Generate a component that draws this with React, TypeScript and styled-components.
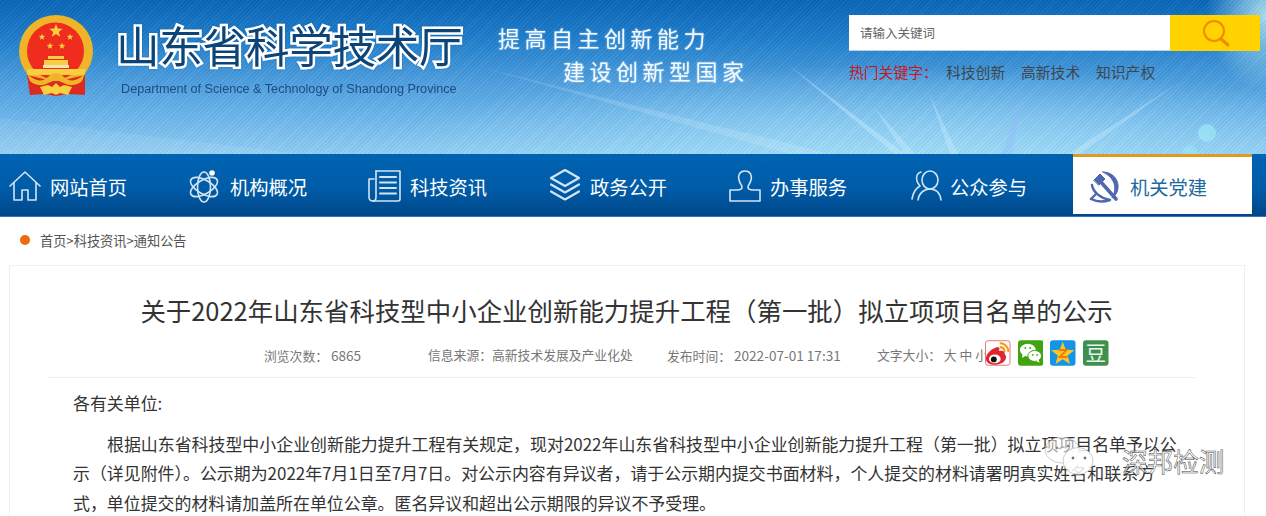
import React from "react";
import styled, { createGlobalStyle } from "styled-components";

const CJK = `"Noto Sans CJK SC", "Liberation Sans", sans-serif`;

const Global = createGlobalStyle`
  html, body { margin: 0; padding: 0; background: #fff; overflow: hidden; }
  body { font-family: ${CJK}; }
  * { box-sizing: border-box; }
`;

const Page = styled.div`
  position: relative;
  width: 1266px;
  height: 516px;
  overflow: hidden;
`;

const Banner = styled.header`
  position: relative;
  height: 154px;
  display: flex;
  overflow: hidden;
  background:
    radial-gradient(ellipse 60px 75px at 1266px 15px, rgba(200, 245, 250, 0.85), transparent 100%),
    radial-gradient(ellipse 700px 130px at 900px 170px, rgba(170, 230, 252, 0.8), transparent 80%),
    linear-gradient(180deg, #0a66b8 0%, #1f7fcc 25%, #4d9fdf 52%, #6db7ec 75%, #92d0f5 100%);
  &::before {
    content: "";
    position: absolute;
    inset: 0;
    background: repeating-linear-gradient(
      -45deg,
      rgba(255, 255, 255, 0.05) 0 1px,
      rgba(0, 40, 100, 0.05) 1px 3px
    );
  }
`;

const Rays = styled.svg`
  position: absolute;
  left: 0;
  top: 0;
  pointer-events: none;
`;

const Brand = styled.div`
  position: relative;
  display: flex;
  width: 488px;
  padding: 15px 0 0 18px;
`;

const Emblem = styled.svg`
  flex: none;
  width: 76px;
  height: 81px;
`;

const BrandText = styled.div`
  margin-left: 22px;
  display: flex;
  flex-direction: column;
  padding-top: 2px;
`;

const Ministry = styled.div`
  font-size: 43.6px;
  line-height: 54px;
  font-weight: 400;
  color: #0d4478;
  letter-spacing: -0.3px;
  white-space: nowrap;
  -webkit-text-stroke: 5px #fff;
  paint-order: stroke fill;
  filter: drop-shadow(0 0 1px rgba(10, 70, 130, 0.35));
`;

const English = styled.div`
  margin: 10px 0 0 5px;
  font-family: "Liberation Sans", sans-serif;
  font-size: 12.65px;
  line-height: 16px;
  color: #1c4c80;
  white-space: nowrap;
  filter: blur(0.25px);
`;

const Slogan = styled.div`
  position: relative;
  width: 361px;
  display: flex;
  flex-direction: column;
  padding: 21px 0 0 10px;
`;

const SloganLine = styled.div<{ $indent: number }>`
  margin-left: ${(p) => p.$indent}px;
  font-family: "Noto Sans CJK SC", sans-serif;
  font-size: 22px;
  line-height: 33px;
  font-weight: 400;
  letter-spacing: 4.5px;
  color: #f2f9ff;
  white-space: nowrap;
  text-shadow: 0 0 2px rgba(255, 255, 255, 0.6);
  filter: blur(0.3px);
`;

const SearchArea = styled.div`
  position: relative;
  padding-top: 15px;
  width: 411px;
`;

const SearchBar = styled.div`
  display: flex;
  height: 36px;
`;

const SearchInput = styled.div`
  width: 321px;
  padding-left: 11px;
  background: #fff;
  border-bottom: 1px solid #b9d3e8;
  font-size: 12.5px;
  line-height: 35px;
  color: #666;
`;

const SearchButton = styled.div`
  width: 90px;
  background: #ffd200;
  display: flex;
  align-items: center;
  justify-content: center;
  padding-left: 2px;
`;

const Hot = styled.div`
  display: flex;
  margin-top: 10px;
  font-size: 14.8px;
  line-height: 22px;
  color: #3c4650;
  white-space: nowrap;
`;

const HotLabel = styled.span`
  color: #c8161d;
  width: 97px;
`;

const HotLink = styled.span`
  margin-right: 15.8px;
`;

const Nav = styled.nav`
  position: relative;
  height: 63px;
  display: flex;
  padding-left: 8px;
  background: linear-gradient(180deg, #0063b2 0%, #005ca8 55%, #00478a 100%);
  border-bottom: 1px solid #2f77b5;
`;

const NavItem = styled.div<{ $active?: boolean }>`
  display: flex;
  align-items: center;
  gap: ${(p) => (p.$active ? "10px" : "8px")};
  width: 180px;
  padding-top: 2px;
  font-size: 19.3px;
  color: #fff;
  white-space: nowrap;
  ${(p) =>
    p.$active &&
    `
    width: 179px;
    margin: 0 0 2px -15px;
    padding: 0 0 0 15px;
    background: #fff;
    color: #1f6a9c;
    border-top: 3px solid #e09a20;
  `}
`;

const NavLabel = styled.span`
  padding-top: 2px;
`;

const NavIcon = styled.svg`
  flex: none;
  width: 34px;
  height: 34px;
  fill: none;
  stroke: #d5e4f2;
  stroke-width: 1.6;
  stroke-linejoin: round;
  stroke-linecap: round;
`;

const PartyIcon = styled.svg`
  flex: none;
  width: 32px;
  height: 34px;
  fill: none;
  stroke: #4f68b0;
  stroke-linecap: round;
  stroke-linejoin: round;
`;

const Crumbs = styled.div`
  display: flex;
  align-items: center;
  height: 46px;
  margin-bottom: 2px;
  padding-left: 20px;
  font-size: 13.2px;
  color: #555;
`;

const Dot = styled.span`
  width: 10px;
  height: 10px;
  margin-right: 10px;
  border-radius: 50%;
  background: #ee6a0a;
`;

const Article = styled.main`
  margin-left: 9px;
  width: 1236px;
  height: 300px;
  padding: 0 48px 0 37px;
  border: 1px solid #f0f0f0;
  border-bottom: none;
`;

const Title = styled.h1`
  margin: 27px 0 0 10px;
  font-size: 25.45px;
  line-height: 34px;
  font-weight: 400;
  text-align: center;
  color: #333;
  white-space: nowrap;
`;

const Meta = styled.div`
  display: flex;
  align-items: center;
  height: 51px;
  padding: 5px 0 0 217px;
  border-bottom: 1px solid #eee;
  font-size: 12.8px;
  color: #777;
  white-space: nowrap;
`;

const MetaItem = styled.span<{ $w: number }>`
  width: ${(p) => p.$w}px;
  flex: none;
`;

const MetaValue = styled.span`
  margin-left: 3px;
  font-size: 13.6px;
`;

const Share = styled.div`
  display: flex;
  gap: 7.2px;
  margin-top: -4px;
`;

const ShareIcon = styled.svg`
  display: block;
  width: 25.5px;
  height: 26px;
`;

const Body = styled.div`
  padding: 0 15px 0 26px;
  margin-right: -1px;
  font-size: 16.93px;
  line-height: 29.7px;
  color: #333;
`;

const Greeting = styled.p`
  margin: 10px 0 11px 0;
`;

const Para = styled.p`
  margin: 0;
  text-indent: 34px;
`;

const Watermark = styled.div`
  position: absolute;
  left: 1044px;
  top: 437px;
  display: flex;
  align-items: flex-start;
`;

const WmText = styled.span`
  margin: 6px 0 0 26px;
  font-size: 25.6px;
  line-height: 36px;
  font-weight: 400;
  white-space: nowrap;
  color: rgba(255, 255, 255, 0.6);
  -webkit-text-stroke: 0.5px #444;
`;

const Bubble = styled.svg`
  flex: none;
  width: 52px;
  height: 40px;
`;

const star = (cx: number, cy: number, r: number) => {
  const pts: string[] = [];
  for (let i = 0; i < 10; i++) {
    const rad = i % 2 ? r * 0.42 : r;
    const a = -Math.PI / 2 + (i * Math.PI) / 5;
    pts.push(`${(cx + rad * Math.cos(a)).toFixed(2)},${(cy + rad * Math.sin(a)).toFixed(2)}`);
  }
  return pts.join(" ");
};

const icons: Record<string, React.ReactNode> = {
  home: (
    <>
      <path d="M2 17 L17 3 L32 17" />
      <path d="M6 14 V31 H14 V21 H20 V31 H28 V14" />
    </>
  ),
  atom: (
    <>
      <ellipse cx="16" cy="18" rx="15" ry="7" transform="rotate(30 16 18)" />
      <ellipse cx="16" cy="18" rx="15" ry="7" transform="rotate(-30 16 18)" />
      <ellipse cx="16" cy="18" rx="6.5" ry="15" />
      <circle cx="24" cy="4" r="2.8" fill="#fff" stroke="none" />
    </>
  ),
  news: (
    <>
      <path d="M8 2 H32 V30 Q32 32 30 32 H5 Q1 32 1 28 V10 H6" />
      <path d="M8 2 V28 Q8 32 5 32" />
      <path d="M12 8 H28 M12 13.5 H28 M12 19 H28 M12 24.5 H28" strokeWidth="2" />
    </>
  ),
  layers: (
    <>
      <path d="M17 1 L31 9 L17 17 L3 9 Z" strokeWidth="2.2" />
      <path d="M3 15.5 L17 23.5 L31 15.5" strokeWidth="2.2" />
      <path d="M3 22.5 L17 30.5 L31 22.5" strokeWidth="2.2" />
    </>
  ),
  person: (
    <>
      <path d="M17 2 C11 2 10 7 11 11 C12 15 14 16 14 18 C14 21 11 21 9 21 H2 V32 H32 V21 H25 C23 21 20 21 20 18 C20 16 22 15 23 11 C24 7 23 2 17 2 Z" />
    </>
  ),
  users: (
    <>
      <ellipse cx="22" cy="11" rx="8" ry="9" />
      <path d="M10 31 C11 24 16 20 22 20 C28 20 32 24 33 31" />
      <path d="M13 3 C9 4 8 8 9 12 C10 15 11 16 12 17 C8 19 5 24 4 30" />
    </>
  ),
};

const navs = [
  ["home", "网站首页"],
  ["atom", "机构概况"],
  ["news", "科技资讯"],
  ["layers", "政务公开"],
  ["person", "办事服务"],
  ["users", "公众参与"],
];

export default function App() {
  return (
    <Page>
      <Global />
      <Banner>
        <Rays width="1266" height="154" viewBox="0 0 1266 154" fill="none">
          <path d="M786 63 L905 154 H895 Z" fill="#d8f3ff" opacity="0.35" />
          <path d="M929 93 L950 154 H958 Z" fill="#d8f3ff" opacity="0.3" />
          <path d="M874 107 L905 154 H915 Z" fill="#d8f3ff" opacity="0.3" />
          <path d="M480 67 L830 154 H790 Z" fill="#ffffff" opacity="0.14" />
          <path d="M1023 93 L1002 154 H1012 Z" fill="#8fb8ff" opacity="0.35" />
          <path d="M1178 83 L1068 154 H1080 Z" fill="#d8f3ff" opacity="0.3" />
          <path d="M0 118 L300 154 H0 Z" fill="#ffffff" opacity="0.08" />
          <circle cx="1207" cy="133" r="9" fill="#a8f4fb" opacity="0.5" />
          <circle cx="1190" cy="152" r="7" fill="#a8f4fb" opacity="0.3" />
        </Rays>
        <Brand>
          <Emblem viewBox="0 0 76 81">
            <ellipse cx="38" cy="36" rx="37" ry="36" fill="#f0b429" />
            <circle cx="37.5" cy="36" r="28.5" fill="#ee2d1f" />
            <polygon points={star(38, 16, 7)} fill="#f8cf3f" />
            <polygon points={star(24, 22, 3.4)} fill="#f8cf3f" />
            <polygon points={star(52, 22, 3.4)} fill="#f8cf3f" />
            <polygon points={star(32, 31, 3.4)} fill="#f8cf3f" />
            <polygon points={star(44, 31, 3.4)} fill="#f8cf3f" />
            <path d="M30 44 H46 V41 H30 Z M26 50 H50 V45 H26 Z" fill="#f8cf3f" />
            <path d="M25 50 H51 V53 H25 Z" fill="#f3e4b4" />
            <path d="M9 54 H67 V60 H9 Z" fill="#f8cf3f" />
            <path d="M9 60 L26 64 L38 66 L50 64 L67 60 L67 80 L50 79 L38 81 L26 79 L12 80 Z" fill="#dc2a20" />
            <path d="M8 56 C14 66 24 68 30 62 C33 59 36 58 38 58 C40 58 43 59 46 62 C52 68 62 66 68 56 L64 66 C60 70 52 72 46 68 L38 65 L30 68 C24 72 16 70 12 66 Z" fill="#f0b429" />
            <path d="M22 72 L30 70 L34 72 L38 68 L42 72 L46 70 L54 72 L50 80 L42 78 L38 80 L34 78 L26 80 Z" fill="#f8cf3f" />
          </Emblem>
          <BrandText>
            <Ministry>山东省科学技术厅</Ministry>
            <English>Department of Science &amp; Technology of Shandong Province</English>
          </BrandText>
        </Brand>
        <Slogan>
          <SloganLine $indent={0}>提高自主创新能力</SloganLine>
          <SloganLine $indent={65}>建设创新型国家</SloganLine>
        </Slogan>
        <SearchArea>
          <SearchBar>
            <SearchInput>请输入关键词</SearchInput>
            <SearchButton>
              <svg width="30" height="30" viewBox="0 0 30 30" fill="none" stroke="#f08a00" strokeLinecap="round">
                <circle cx="13" cy="13" r="10" strokeWidth="2" />
                <path d="M20 21 L27 27" strokeWidth="3" />
              </svg>
            </SearchButton>
          </SearchBar>
          <Hot>
            <HotLabel>热门关键字：</HotLabel>
            <HotLink>科技创新</HotLink>
            <HotLink>高新技术</HotLink>
            <HotLink>知识产权</HotLink>
          </Hot>
        </SearchArea>
      </Banner>
      <Nav>
        {navs.map(([k, label]) => (
          <NavItem key={k}>
            <NavIcon viewBox="0 0 34 34">{icons[k]}</NavIcon>
            <NavLabel>{label}</NavLabel>
          </NavItem>
        ))}
        <NavItem $active>
          <PartyIcon viewBox="0 0 32 34">
            <path d="M15 3 C25 3 31 11 30 19 C29.5 24 27 27 24 29 C27 24 28 18 25 12 C23 8 19 5 15 3 Z" fill="#4f68b0" strokeWidth="1" />
            <path d="M6 11 L12 5 L17 10 L11 16 Z" fill="#4f68b0" strokeWidth="1" />
            <path d="M12 12 L28 30" strokeWidth="3.6" />
            <path d="M4 16 C5 23 12 29 22 31 C16 33 9 33 3 30" strokeWidth="2.4" />
            <path d="M3 30 L8 25" strokeWidth="2.4" />
          </PartyIcon>
          <NavLabel>机关党建</NavLabel>
        </NavItem>
      </Nav>
      <Crumbs>
        <Dot />
        首页&gt;科技资讯&gt;通知公告
      </Crumbs>
      <Article>
        <Title>关于2022年山东省科技型中小企业创新能力提升工程（第一批）拟立项项目名单的公示</Title>
        <Meta>
          <MetaItem $w={164}>
            浏览次数：<MetaValue>6865</MetaValue>
          </MetaItem>
          <MetaItem $w={239}>信息来源：高新技术发展及产业化处</MetaItem>
          <MetaItem $w={210}>
            发布时间：<MetaValue>2022-07-01 17:31</MetaValue>
          </MetaItem>
          <MetaItem $w={108}>文字大小： 大 中 小</MetaItem>
          <Share>
            <ShareIcon viewBox="0 0 26 26">
              <rect x="0.5" y="0.5" width="25" height="25" rx="2.5" fill="#fff" stroke="#e2777c" />
              <path d="M1 19 C1 13 8 8 13 7 C15 7 15 10 14 11 C17 10 21 11 20 14 C23 16 22 24 11 25 C5 25 1 23 1 19 Z" fill="#e0262c" />
              <ellipse cx="10" cy="19" rx="6" ry="4.5" fill="#fff" />
              <circle cx="9" cy="19.5" r="3" fill="#111" />
              <path d="M15 3 C20 3 24 7 24 12 M15 7 C18 7 20 9 20 12" stroke="#f59a1c" strokeWidth="2.2" fill="none" />
            </ShareIcon>
            <ShareIcon viewBox="0 0 26 26">
              <rect width="26" height="26" rx="3" fill="#3fa40f" />
              <ellipse cx="10" cy="10" rx="8" ry="6.5" fill="#fff" />
              <path d="M5 14 L4 18 L9 15 Z" fill="#fff" />
              <ellipse cx="17" cy="16" rx="7" ry="5.6" fill="#fff" stroke="#3fa40f" />
              <path d="M21 20 L22 23 L18 21 Z" fill="#fff" />
              <circle cx="7.5" cy="8" r="1" fill="#3fa40f" />
              <circle cx="12.5" cy="8" r="1" fill="#3fa40f" />
              <circle cx="15" cy="15" r="0.9" fill="#3fa40f" />
              <circle cx="19.5" cy="15" r="0.9" fill="#3fa40f" />
            </ShareIcon>
            <ShareIcon viewBox="0 0 26 26">
              <rect width="26" height="26" rx="3" fill="#1493e8" />
              <polygon points={star(13, 14, 12.5)} fill="#fdc81e" />
              <path d="M9 10 H17 L10 17 H18" stroke="#ec7a14" strokeWidth="2" fill="none" />
            </ShareIcon>
            <ShareIcon viewBox="0 0 26 26">
              <rect width="26" height="26" rx="3" fill="#3f8f4f" />
              <text x="13" y="21" fontSize="21" textAnchor="middle" fill="#e8f4ea" fontFamily="Noto Sans CJK SC">豆</text>
            </ShareIcon>
          </Share>
        </Meta>
        <Body>
          <Greeting>各有关单位:</Greeting>
          <Para>
            根据山东省科技型中小企业创新能力提升工程有关规定，现对2022年山东省科技型中小企业创新能力提升工程（第一批）拟立项项目名单予以公示（详见附件）。公示期为2022年7月1日至7月7日。对公示内容有异议者，请于公示期内提交书面材料，个人提交的材料请署明真实姓名和联系方式，单位提交的材料请加盖所在单位公章。匿名异议和超出公示期限的异议不予受理。
          </Para>
        </Body>
      </Article>
      <Watermark>
        <Bubble viewBox="0 0 52 40" stroke="#aaa" strokeWidth="0.6">
          <ellipse cx="18" cy="13" rx="17" ry="13" fill="rgba(255,255,255,0.55)" />
          <circle cx="13" cy="11" r="1.1" fill="#444" />
          <circle cx="24" cy="9" r="1.1" fill="#444" />
          <ellipse cx="34" cy="24" rx="15" ry="13.5" fill="rgba(255,255,255,0.85)" />
          <circle cx="29" cy="21" r="1.2" fill="#444" />
          <circle cx="41" cy="21" r="1.2" fill="#444" />
        </Bubble>
        <WmText>深邦检测</WmText>
      </Watermark>
    </Page>
  );
}
